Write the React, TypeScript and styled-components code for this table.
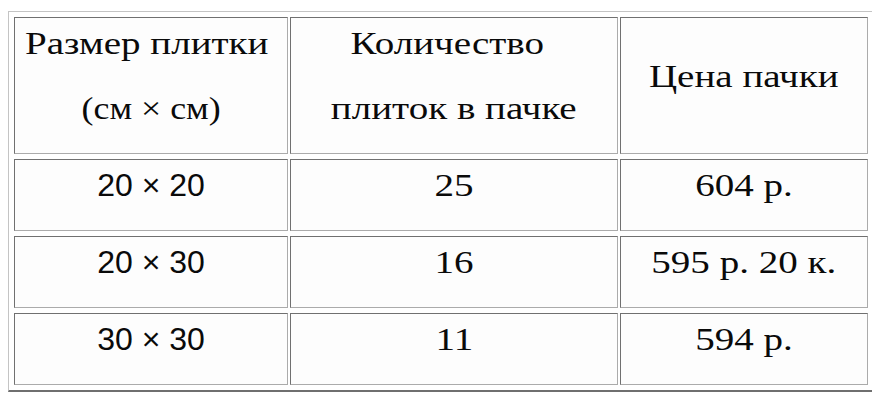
import React from "react";
import styled, { createGlobalStyle } from "styled-components";

const GlobalStyle = createGlobalStyle`
  * {
    box-sizing: border-box;
  }
  body {
    margin: 8px;
    background: #ffffff;
    color: #0a0a0a;
    font-family: "Liberation Serif", "Times New Roman", serif;
  }
`;

const PriceTable = styled.table`
  margin-top: 3px;
  width: 866px;
  table-layout: fixed;
  border-collapse: separate;
  border-spacing: 2px 5px;
  padding: 0 2px 0 3px;
  border-style: solid;
  border-width: 1px 2px 2px 1px;
  border-color: #c4c4c4 #6f6f6f #6f6f6f #c4c4c4;
  background: #ffffff;
`;

const Cell = styled.td<{ $width?: number; $sans?: boolean }>`
  width: ${(p) => (p.$width ? `${p.$width}px` : "auto")};
  padding: 7px 0 26px;
  text-align: center;
  vertical-align: middle;
  font-family: ${(p) =>
    p.$sans
      ? `"Liberation Sans", Arial, sans-serif`
      : `"Liberation Serif", "Times New Roman", serif`};
  font-size: 32px;
  line-height: 37px;
  white-space: nowrap;
  background: #fdfdfd;
  border-style: solid;
  border-width: 1px;
  border-color: #707070 #ababab #ababab #707070;
`;

const Line = styled.div<{ $offset?: number }>`
  line-height: 37px;
  padding-right: ${(p) => p.$offset ?? 0}px;
  & + & {
    margin-top: 28px;
  }
`;

// the serif text in the source is drawn noticeably wider than Times
const Wide = styled.span<{ $scale?: number }>`
  display: inline-block;
  transform: scaleX(${(p) => p.$scale ?? 1.22});
  transform-origin: center;
`;

const rows = [
  { size: "20 × 20", count: "25", price: "604 р." },
  { size: "20 × 30", count: "16", price: "595 р. 20 к." },
  { size: "30 × 30", count: "11", price: "594 р." },
];

export default function App() {
  return (
    <>
      <GlobalStyle />
      <PriceTable>
        <tbody>
          <tr>
            <Cell $width={274}>
              <Line $offset={9}>
                <Wide>Размер плитки</Wide>
              </Line>
              <Line>
                <Wide $scale={1.12}>(см × см)</Wide>
              </Line>
            </Cell>
            <Cell $width={328}>
              <Line $offset={14}>
                <Wide>Количество</Wide>
              </Line>
              <Line>
                <Wide>плиток в пачке</Wide>
              </Line>
            </Cell>
            <Cell $width={248}>
              <Line>
                <Wide>Цена пачки</Wide>
              </Line>
            </Cell>
          </tr>
          {rows.map((r) => (
            <tr key={r.size}>
              <Cell $sans>{r.size}</Cell>
              <Cell>
                <Wide>{r.count}</Wide>
              </Cell>
              <Cell>
                <Wide>{r.price}</Wide>
              </Cell>
            </tr>
          ))}
        </tbody>
      </PriceTable>
    </>
  );
}
